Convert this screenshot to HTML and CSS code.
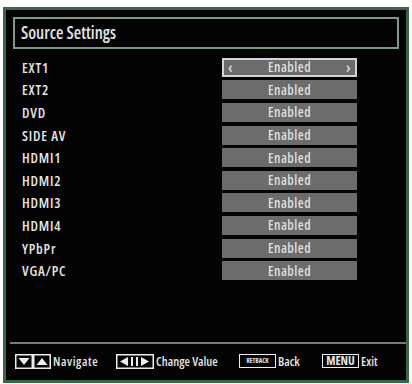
FILE: index.html
```html
<!DOCTYPE html>
<html lang="en">

<head>
    <meta charset="UTF-8">
    <meta name="viewport" content="width=device-width, initial-scale=1.0">
    <title>Source Settings</title>
    <link rel="stylesheet" href="styles.css">
</head>

<body>
    <div class="screen">
        <div class="title">Source Settings</div>

        <ul class="list">
            <li class="row"><span class="label">EXT1</span><span class="value active"><i>&lsaquo;</i>Enabled<i>&rsaquo;</i></span></li>
            <li class="row"><span class="label">EXT2</span><span class="value">Enabled</span></li>
            <li class="row"><span class="label">DVD</span><span class="value">Enabled</span></li>
            <li class="row"><span class="label">SIDE AV</span><span class="value">Enabled</span></li>
            <li class="row"><span class="label">HDMI1</span><span class="value">Enabled</span></li>
            <li class="row"><span class="label">HDMI2</span><span class="value">Enabled</span></li>
            <li class="row"><span class="label">HDMI3</span><span class="value">Enabled</span></li>
            <li class="row"><span class="label">HDMI4</span><span class="value">Enabled</span></li>
            <li class="row"><span class="label">YPbPr</span><span class="value">Enabled</span></li>
            <li class="row"><span class="label">VGA/PC</span><span class="value">Enabled</span></li>
        </ul>

        <div class="footer">
            <div class="hint hint-nav">
                <svg width="36" height="15" viewBox="0 0 36 15">
                    <rect x="0.75" y="0.75" width="16.5" height="13.5" fill="none" stroke="#eee" stroke-width="1.5"/>
                    <rect x="18.75" y="0.75" width="16.5" height="13.5" fill="none" stroke="#eee" stroke-width="1.5"/>
                    <polygon points="3.5,4 14.5,4 9,11" fill="#eee"/>
                    <polygon points="21.5,11 32.5,11 27,4" fill="#eee"/>
                </svg>
                <span>Navigate</span>
            </div>
            <div class="hint hint-change">
                <svg width="38" height="15" viewBox="0 0 38 15">
                    <rect x="0.75" y="0.75" width="36.5" height="13.5" fill="none" stroke="#eee" stroke-width="1.5"/>
                    <polygon points="4,7.5 12,3 12,12" fill="#eee"/>
                    <rect x="15" y="3" width="2" height="9" fill="#eee"/>
                    <rect x="20" y="3" width="2" height="9" fill="#eee"/>
                    <polygon points="33,7.5 25,3 25,12" fill="#eee"/>
                </svg>
                <span>Change Value</span>
            </div>
            <div class="hint hint-back">
                <span class="key key-small">RETBACK</span>
                <span>Back</span>
            </div>
            <div class="hint hint-exit">
                <span class="key">MENU</span>
                <span>Exit</span>
            </div>
        </div>
    </div>
</body>

</html>
```

FILE: styles.css
```css
html,
body {
    padding: 0;
    margin: 0;
    background: #fff;
}

ul {
    margin: 0;
    padding: 0;
}

li {
    list-style: none;
}

.screen {
    box-sizing: border-box;
    display: flex;
    flex-direction: column;
    width: 406px;
    height: 376px;
    margin: 7px 0 0 3px;
    padding: 7px 7px 0 7px;
    background: #030303;
    border: 3px solid #3b6547;
    font-family: "Open Sans", "DejaVu Sans Condensed", sans-serif;
    font-stretch: 75%;
    color: #e4e4e4;
}

.title {
    box-sizing: border-box;
    height: 32px;
    padding-left: 6px;
    border: 2px solid #7f9885;
    font-size: 17px;
    line-height: 28px;
    font-weight: 600;
}

.list {
    margin-top: 7px;
}

.row {
    display: grid;
    grid-template-columns: 209px 135px;
    align-items: center;
    height: 22.6px;
}

.label {
    padding-left: 9px;
    font-size: 14px;
    font-weight: 600;
    letter-spacing: 0.8px;
}

.value {
    box-sizing: border-box;
    display: flex;
    justify-content: center;
    align-items: center;
    height: 19px;
    background: #6c6c6c;
    font-size: 13.5px;
    font-weight: 600;
    letter-spacing: 0.5px;
    color: #dedede;
}

.value.active {
    justify-content: space-between;
    padding: 0 4px;
    border: 2px solid #d4d4d4;
}

.value i {
    font-style: normal;
    font-size: 16px;
    line-height: 15px;
}

.footer {
    display: flex;
    align-items: center;
    margin-top: auto;
    margin-left: -3px;
    margin-right: -7px;
    height: 30px;
    padding: 2px 0 4px 5px;
    border-top: 2px solid #7a7a7a;
    font-size: 12.5px;
    font-weight: 600;
}

.hint {
    display: flex;
    align-items: center;
    gap: 2px;
}

.hint svg {
    display: block;
}

.hint-nav {
    width: 101px;
    letter-spacing: 0.6px;
}

.hint-change {
    width: 123px;
}

.hint-back {
    width: 83px;
}

.key {
    box-sizing: border-box;
    display: flex;
    justify-content: center;
    align-items: center;
    flex: none;
    width: 37px;
    height: 14px;
    border: 1.5px solid #eee;
    font-size: 12px;
    line-height: 10px;
    font-weight: 700;
    letter-spacing: 0;
}

.key-small {
    font-size: 6.5px;
}
```
